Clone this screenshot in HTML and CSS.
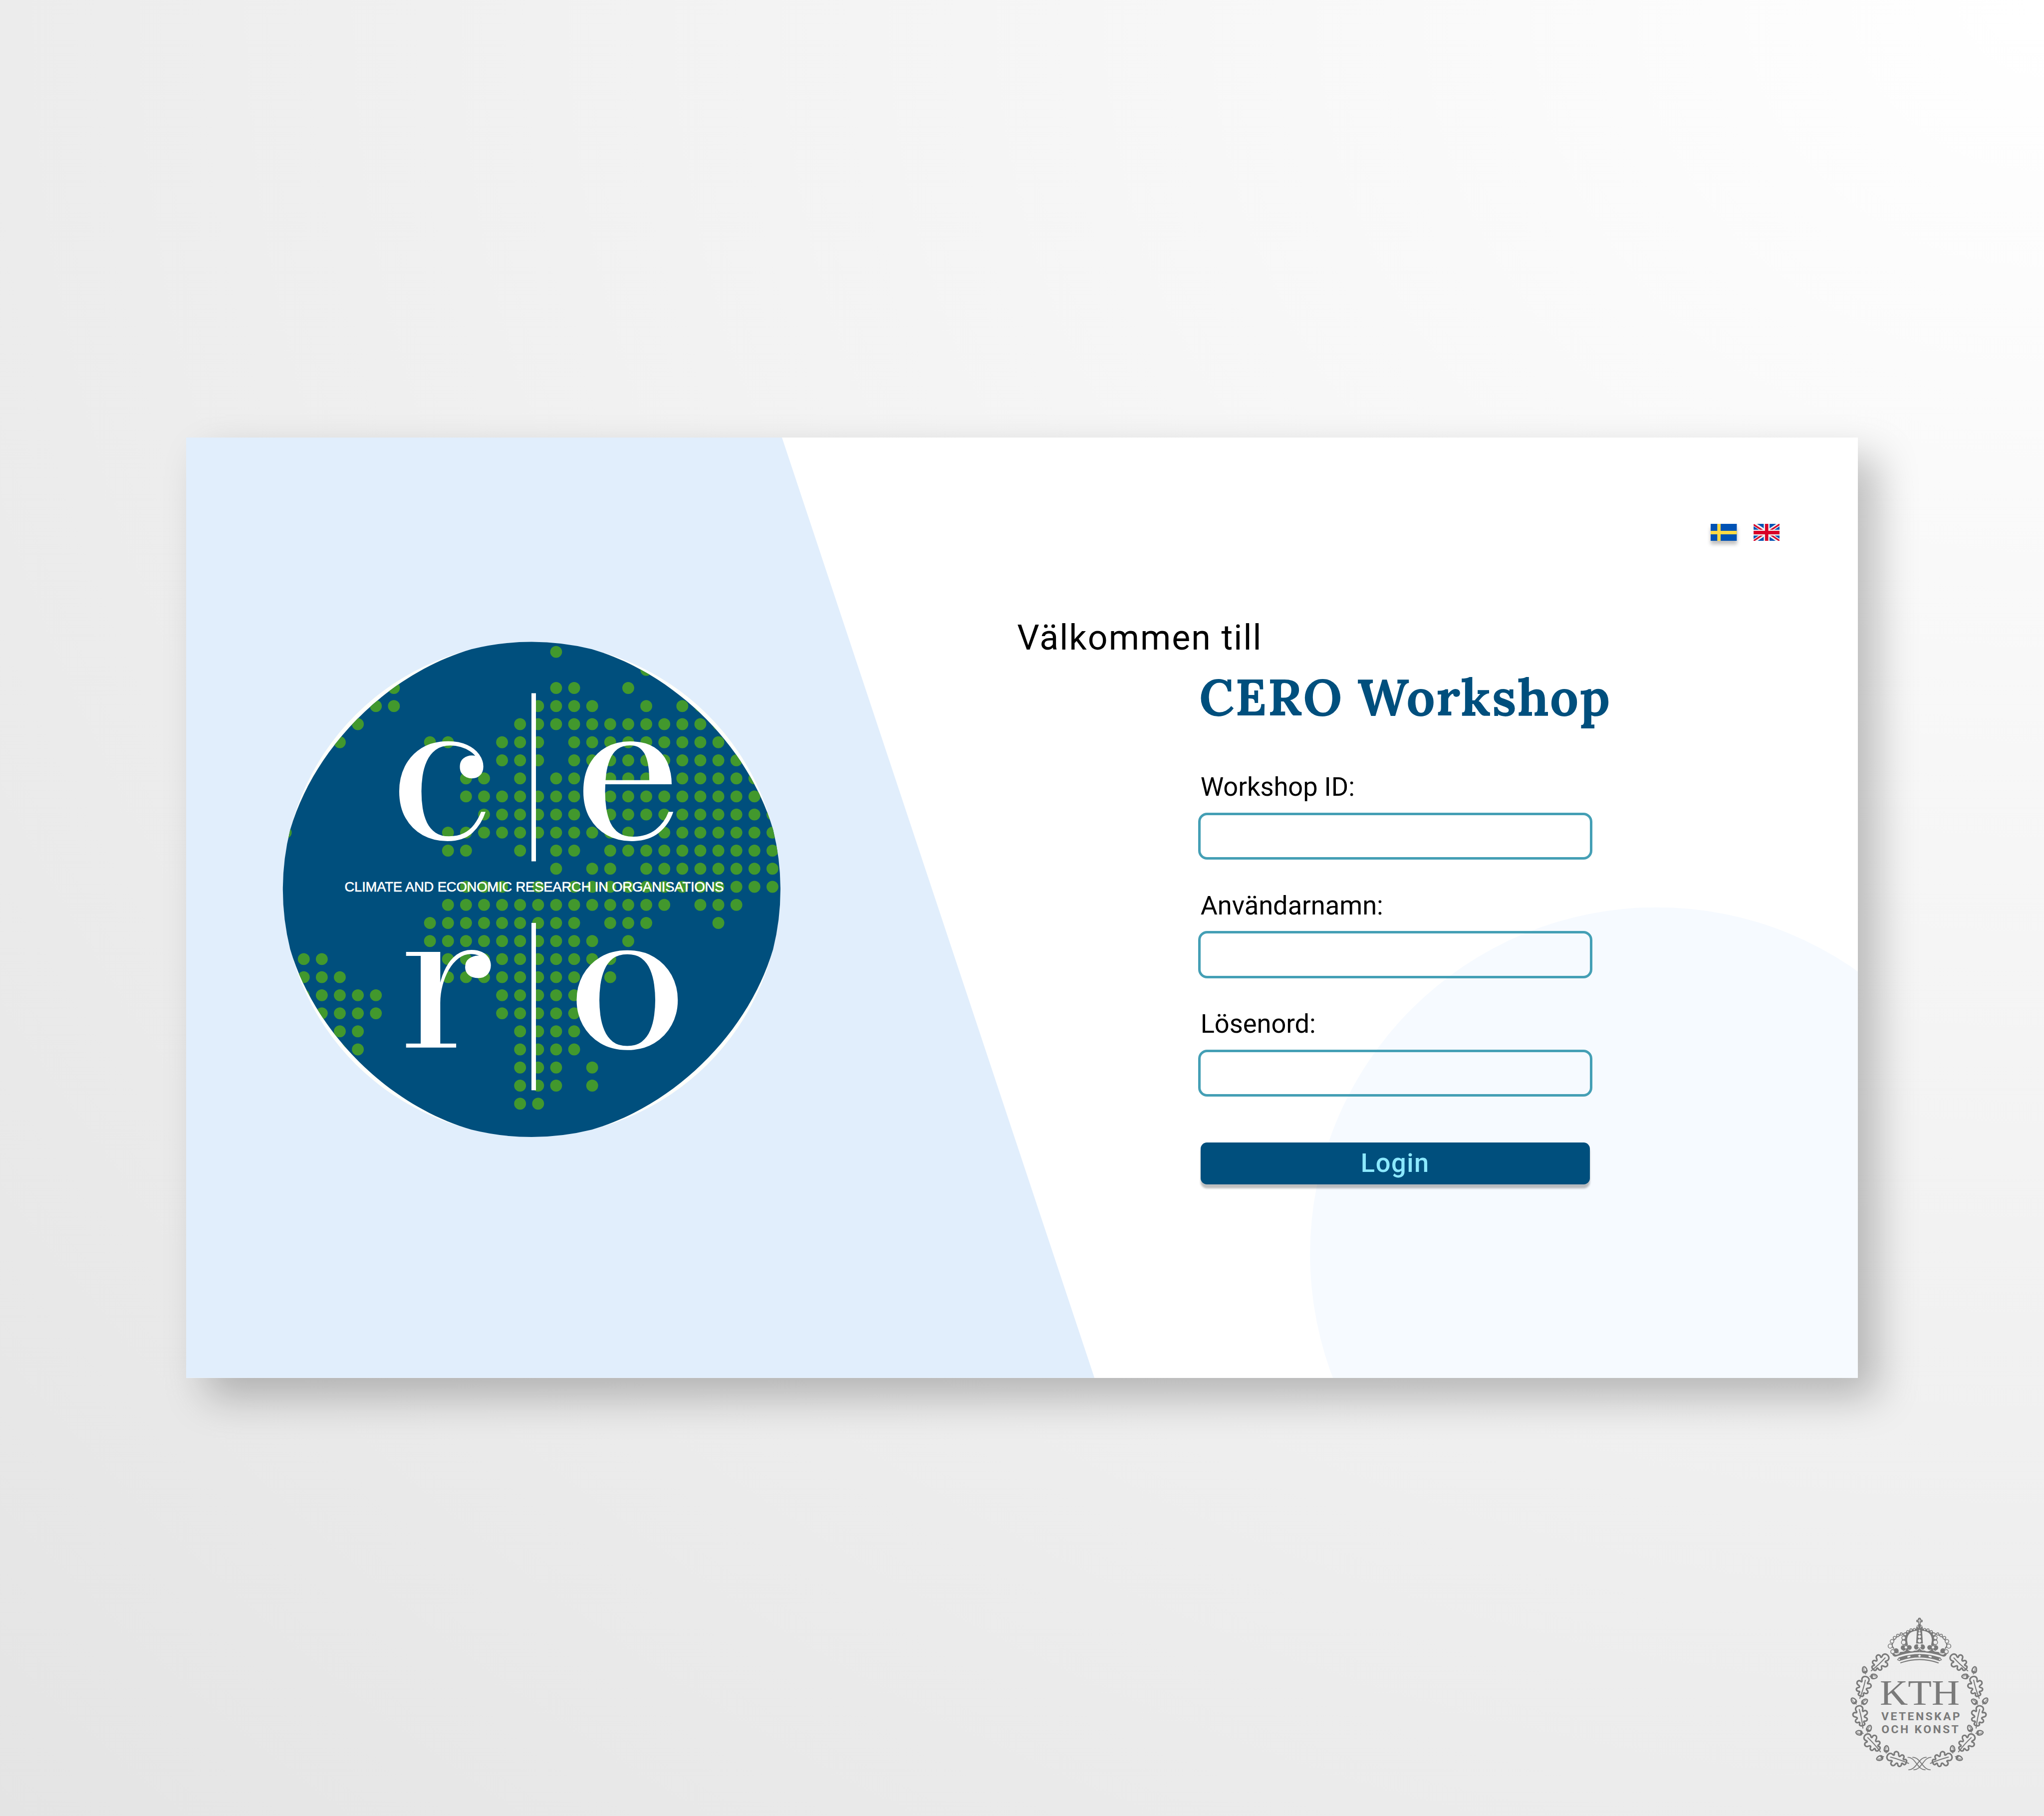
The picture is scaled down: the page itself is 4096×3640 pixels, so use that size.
FILE: index.html
```html
<!DOCTYPE html>
<html lang="sv">
<head>
<meta charset="utf-8">
<title>CERO Workshop</title>
<link rel="stylesheet" href="styles.css">
</head>
<body>
<main class="card">
  <div class="slant"></div>
  <div class="disc"></div>
  <svg class="logo" viewBox="700 1620 1340 1310" role="img" aria-label="CERO">
    <defs>
      <clipPath id="rim"><ellipse cx="1361" cy="2279" rx="637" ry="634"/></clipPath>
      <clipPath id="globe" clip-path="url(#rim)"><path d="M720 2279C720 1955 1035.400 1641 1361 1641S2002 1955 2002 2279S1686.600 2917 1361 2917S720 2603 720 2279Z"/></clipPath>
    </defs>
    <ellipse cx="1361" cy="2279" rx="636.500" ry="633.500" fill="#fffffb"/>
    <g clip-path="url(#globe)">
      <rect x="700" y="1620" width="1340" height="1310" fill="#004f7d"/>
      <path class="dots" transform="translate(777.600 1670.600) scale(46.150 46.280)" d="M14 0h.1M19 1h.1
        M5 2h.1M14 2h1.100M18 2h.1
        M4 3h1.100M13 3h3.100M19 3h.1M21 3h1.100
        M3 4h.1M12 4h11.100
        M2 5h.1M7 5h1.100M11 5h2.100M15 5h8.100
        M11 6h2.100M15 6h9.100
        M9 7h1.100M12 7h.1M14 7h1.100M17 7h8.100
        M9 8h6.100M17 8h8.100
        M10 9h5.100M17 9h9.100
        M-1 10h.1M8 10h10.100M20 10h6.100
        M8 11h1.100M12 11h.1M14 11h1.100M17 11h9.100
        M14 12h.1M16 12h1.100M19 12h7.100
        M9 13h2.100M13 13h.1M15 13h11.100
        M8 14h12.100M22 14h2.100
        M7 15h8.100M17 15h2.100M23 15h.1
        M7 16h9.100M18 16h.1
        M0 17h1.100M8 17h9.100
        M0 18h2.100M8 18h7.100M17 18h.1
        M0 19h4.100M11 19h4.100
        M1 20h3.100M11 20h4.100
        M2 21h1.100M12 21h3.100
        M2 22h1.100M12 22h3.100
        M12 23h2.100M16 23h.1
        M12 24h2.100M16 24h.1
        M12 25h1.100"/>
    </g>
    <g fill="#fff">
      <rect x="1360.500" y="1776.500" width="11.500" height="430.500"/>
      <rect x="1360.500" y="2364.700" width="11.500" height="428.500"/>
      <g class="letters">
        <text transform="translate(994 2150) scale(1.017 1)">c</text>
        <text transform="translate(1465.500 2150) scale(1.014 1)">e</text>
        <text transform="translate(1018.500 2684) scale(1.075 1)">r</text>
        <text transform="translate(1447 2685) scale(1.061 1)">o</text>
      </g>
      <text class="tagline" x="882" y="2285" textLength="971">CLIMATE AND ECONOMIC RESEARCH IN ORGANISATIONS</text>
    </g>
  </svg>
  <section class="panel">
    <nav class="flags">
      <svg class="flag flag-active" viewBox="0 0 67 44.500"><path fill="#0052b4" d="M0 0h67v44.500H0z"/><path fill="#ffda44" d="M17 0h8.500v44.500H17zM0 18h67v8.800H0z"/></svg>
      <svg class="flag" viewBox="0 0 67 44.500"><path fill="#0052b4" d="M0 0h67v44.500H0z"/><path stroke="#f0f0f0" stroke-width="10" d="M0 0l67 44.500M67 0L0 44.500"/><path stroke="#d80027" stroke-width="4" d="M0 2l28 18M67 1L38 20M0 43.500L28 25M67 43.500L39 25"/><path fill="#f0f0f0" d="M26 0h15v44.500H26zM0 15h67v15H0z"/><path fill="#d80027" d="M29.300 0h8.400v44.500h-8.400zM0 18h67v8.800H0z"/></svg>
    </nav>
    <p class="welcome">Välkommen till</p>
    <form class="login">
      <h1 class="title">CERO Workshop</h1>
      <label class="label" for="ws">Workshop ID:</label>
      <input class="field" id="ws" type="text">
      <label class="label" for="user">Användarnamn:</label>
      <input class="field" id="user" type="text">
      <label class="label" for="pass">Lösenord:</label>
      <input class="field" id="pass" type="password">
      <button class="submit" type="button">Login</button>
    </form>
  </section>
</main>
<footer class="footer">
  <svg class="kth" viewBox="0 0 1290 1350" role="img" aria-label="KTH">
    <defs>
      <g id="leaf">
        <path stroke-width="12" d="M0 6C-18 6-28 18-28 30C-28 42-18 48-24 54C-30 58-36 46-46 52C-60 60-58 76-48 82C-38 88-26 88-28 98C-30 106-44 102-46 116C-46 130-32 134-22 130C-14 130-14 138-19 144C-24 154-14 164 0 160C14 164 24 154 19 144C14 138 14 130 22 130C32 134 46 130 46 116C44 102 30 106 28 98C26 88 38 88 48 82C58 76 60 60 46 52C36 46 30 58 24 54C18 48 28 42 28 30C28 18 18 6 0 6Z"/>
        <path stroke-width="8" d="M0 34Q6 100 0 180"/>
      </g>
      <g id="acorn">
        <path stroke-width="10" d="M-16 8C-20-12-8-27 0-27S20-12 16 8"/>
        <path stroke-width="5" d="M-5 3Q-6-8-1-16"/>
        <path stroke-width="6" fill="#7a7a7a" d="M-19 6Q0 14 19 6Q16 23 0 23T-19 6ZM0 22v9"/>
      </g>
      <g id="half">
        <use href="#leaf" transform="translate(403 387) rotate(47)"/>
        <use href="#leaf" transform="translate(236 549) rotate(17)"/>
        <use href="#leaf" transform="translate(173 773) rotate(-11)"/>
        <use href="#leaf" transform="translate(222 998) rotate(-42)"/>
        <use href="#leaf" transform="translate(388 1162) rotate(-71)"/>
        <use href="#acorn" transform="translate(221 505) rotate(-14)"/>
        <use href="#acorn" transform="translate(290 553) rotate(92)"/>
        <use href="#acorn" transform="translate(138 742) rotate(-38)"/>
        <use href="#acorn" transform="translate(219 748) rotate(52)"/>
        <use href="#acorn" transform="translate(180 986) rotate(-82)"/>
        <use href="#acorn" transform="translate(254 954) rotate(24)"/>
        <use href="#acorn" transform="translate(388 1112) rotate(4)"/>
        <use href="#acorn" transform="translate(339 1180) rotate(-112)"/>
        <path stroke-width="7" d="M553 1174C612 1174 625 1270 686 1270M590 1174C650 1174 665 1270 725 1270"/>
      </g>
      <g id="crownhalf">
        <path fill="none" stroke-width="9" d="M276 116Q215 116 160 152Q84 168 72 235Q70 250 84 262"/>
        <path fill="#7a7a7a" stroke="none" d="M282 104L255 112Q190 122 160 162L146 200L152 235L193 240L187 200Q188 132 262 127L256 225H282Z"/>
        <g fill="#7a7a7a" stroke="none">
          <circle cx="158" cy="257" r="20"/><circle cx="203" cy="256" r="19"/><circle cx="261" cy="252" r="21"/><circle cx="102" cy="281" r="20"/>
          <path d="M55 296Q74 306 88 301Q106 318 122 290Q150 296 164 268H195Q206 290 232 284Q250 280 268 262H282V292Q190 292 100 326Q80 326 72 306Z"/>
        </g>
        <path fill="none" stroke="#eee" stroke-width="6" d="M95 305Q128 315 132 275M135 284Q165 290 175 274M198 274Q220 288 238 270M240 275Q268 280 276 262"/>
        <g fill="#eee" stroke-width="6">
          <circle cx="242" cy="117" r="8"/><circle cx="217" cy="121" r="9"/><circle cx="192" cy="134" r="9"/><circle cx="142" cy="152" r="9"/><circle cx="116" cy="163" r="10"/><circle cx="91" cy="181" r="11"/><circle cx="71" cy="208" r="14"/><circle cx="57" cy="245" r="16"/><circle cx="76" cy="287" r="15"/><circle cx="172" cy="154" r="11"/><circle cx="160" cy="181" r="14"/><circle cx="160" cy="216" r="17"/><circle cx="178" cy="254" r="13"/>
        </g>
      </g>
    </defs>
    <g fill="none" stroke="#7a7a7a" stroke-linecap="round" stroke-linejoin="round">
      <use href="#half"/>
      <use href="#half" transform="translate(1284) scale(-1 1)"/>
      <g transform="translate(360 75)">
        <use href="#crownhalf"/>
        <use href="#crownhalf" transform="translate(564) scale(-1 1)"/>
        <path fill="#7a7a7a" stroke="none" d="M273 74V62H262Q252 52 262 42H271Q268 28 282 27Q296 28 293 42H302Q312 52 302 62H291V80Q308 86 308 112H256Q256 86 273 80Z"/>
        <path stroke="#eee" stroke-width="4" d="M282 38v34M270 51h24M272 96v6M291 96v6M264 96q2-6 6-8M300 96q-2-6-6-8"/>
        <g fill="#eee" stroke="none"><circle cx="282" cy="127" r="6"/><circle cx="282" cy="146" r="9"/><circle cx="282" cy="172" r="11"/><circle cx="282" cy="204" r="13"/><circle cx="282" cy="245" r="12"/></g>
        <path stroke-linecap="butt" stroke-width="27" d="M126 346Q282 292 438 346"/>
        <path fill="#7a7a7a" stroke-width="4" d="M112 350l13-17 14 14-10 11zM452 350l-13-17-14 14 10 11z"/>
        <g fill="#eee" stroke="none"><path d="M118 347l9-7 7 7-8 6zM446 347l-9-7-7 7 8 6zM270 320l12-10 12 10-12 10z"/><path d="M188 324q10-6 24-6v11q-12 1-21 6zM376 324q-10-6-24-6v11q12 1 21 6z"/></g>
        <path stroke-linecap="butt" stroke-width="8" d="M135 374Q282 322 429 374"/>
      </g>
    </g>
    <g fill="#7a7a7a">
      <text class="kth-name" x="337" y="770" textLength="614" lengthAdjust="spacingAndGlyphs">KTH</text>
      <text class="kth-motto" x="349" y="890" textLength="604">VETENSKAP</text>
      <text class="kth-motto" x="350" y="990" textLength="592">OCH KONST</text>
    </g>
  </svg>
</footer>
</body>
</html>
```
FILE: styles.css
```css
html {
  font-size: 78.272px;
}

body {
  margin: 0;
  box-sizing: border-box;
  width: 4096px;
  height: 3640px;
  padding: 11.205rem 0 0 4.76rem;
  overflow: hidden;
  background: radial-gradient(ellipse farthest-corner at top right, #ffffff, #e4e4e4);
  font-family: Roboto, sans-serif;
  color: #000;
}

.card {
  position: relative;
  display: flex;
  align-items: flex-start;
  width: 42.81rem;
  height: 24.08rem;
  background: #fff;
  box-shadow: 0.5rem 0.5rem 1rem rgba(0, 0, 0, 0.25);
}

.slant {
  position: absolute;
  inset: 0;
  background: #e1eefc;
  clip-path: polygon(0 0, 15.26rem 0, 23.26rem 100%, 0 100%);
}

.disc {
  position: absolute;
  inset: 0;
  background: #f6faff;
  clip-path: circle(8.88rem at 37.66rem 20.91rem);
}

.logo {
  position: relative;
  flex: none;
  width: 13.4rem;
  height: 13.1rem;
  margin: 4.985rem 0 0 2.24rem;
}

.dots {
  fill: none;
  stroke: #42982d;
  stroke-width: 0.66;
  stroke-linecap: round;
  stroke-dasharray: 0 1;
}

.letters {
  font-family: "Bodoni Moda", "Libre Bodoni", "Playfair Display", "Bodoni MT", Didot, "Liberation Serif", serif;
  font-size: 533px;
}

.tagline {
  font-family: "Liberation Sans", sans-serif;
  font-size: 35px;
  stroke: #fff;
  stroke-width: 0.8px;
}

.panel {
  position: relative;
  flex: 1;
  display: flex;
  flex-direction: column;
  padding: 2.205rem 2.005rem 0 5.64rem;
}

.flags {
  display: flex;
  justify-content: flex-end;
  gap: 0.425rem;
}

.flag {
  width: 0.67rem;
  height: 0.445rem;
}

.flag-active {
  box-shadow: 0 0.09rem 0.09rem rgba(0, 0, 0, 0.25);
}

.welcome {
  margin: 1.98rem 0 0;
  font-size: 0.892rem;
  line-height: 1rem;
  letter-spacing: 0.03em;
  white-space: nowrap;
}

.login {
  display: flex;
  flex-direction: column;
  width: 10.1rem;
  margin: 0.328rem 0 0 4.63rem;
}

.title {
  margin: 0 0 1.195rem 0.03rem;
  font-family: Lora, "Liberation Serif", serif;
  font-weight: 700;
  font-size: 1.3rem;
  line-height: 1.4rem;
  letter-spacing: 0.018em;
  color: #004f7d;
  white-space: nowrap;
}

.label {
  margin-left: 0.065rem;
  font-size: 0.669rem;
  line-height: 0.8rem;
}

.field {
  box-sizing: border-box;
  width: 100%;
  height: 1.205rem;
  margin: 0.252rem 0 0.776rem;
  padding: 0 0.2rem;
  border: 0.067rem solid #449fb5;
  border-radius: 0.23rem;
  background: transparent;
  font: inherit;
}

.submit {
  width: 9.96rem;
  height: 1.07rem;
  margin: 0.404rem 0 0 0.07rem;
  padding: 0;
  border: 0;
  border-radius: 0.16rem;
  background: #004f7d;
  box-shadow: 0 0.09rem 0.05rem rgba(0, 0, 0, 0.25);
  font-family: Roboto, sans-serif;
  font-weight: 500;
  font-size: 0.669rem;
  line-height: 1.07rem;
  letter-spacing: 0.03em;
  color: #8ce9ff;
}

.footer {
  width: 4.3rem;
  margin: 5.8rem 0 0 42.24rem;
}

.kth {
  display: block;
  width: 4.3rem;
  height: 4.5rem;
}

.kth-name {
  font-family: "Liberation Serif", serif;
  font-size: 275px;
}

.kth-motto {
  font-family: Roboto, sans-serif;
  font-weight: 700;
  font-size: 88px;
}
```
